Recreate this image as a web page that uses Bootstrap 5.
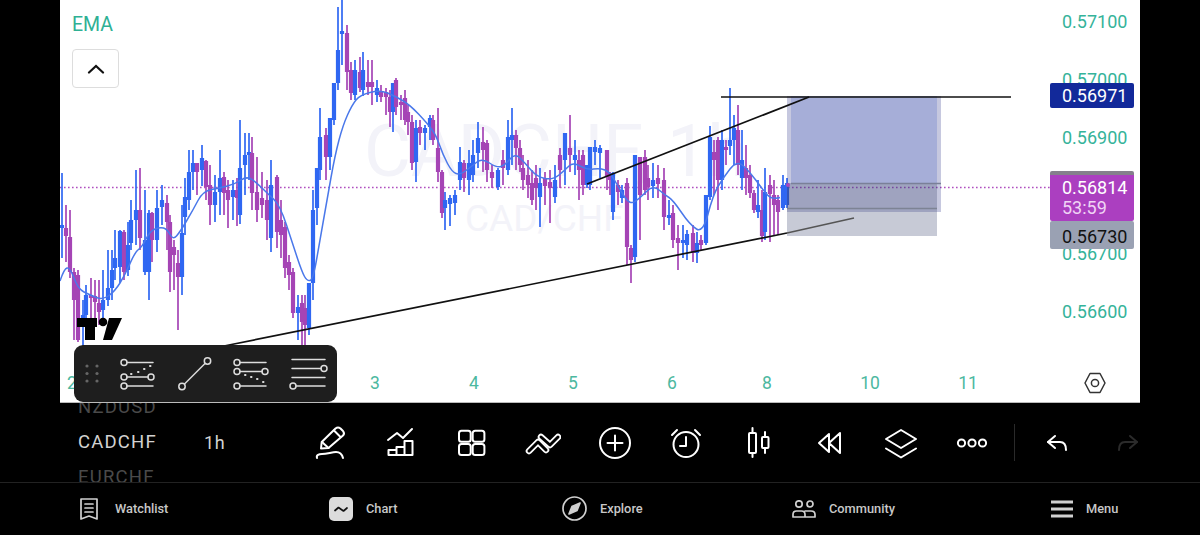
<!DOCTYPE html>
<html lang="en">
<head>
  <meta charset="UTF-8">
  <title>CADCHF Chart</title>
  <link href="https://cdn.jsdelivr.net/npm/bootstrap@5.3.3/dist/css/bootstrap.min.css" rel="stylesheet">
  <style>
    html, body { height: 535px; overflow: hidden; }
    body { background: #000; font-family: Roboto, "Liberation Sans", sans-serif; }
    .chart-area { width: 1080px; height: 403px; margin: 0 auto; background: #fff; position: relative; overflow: hidden; border-bottom: 1px solid #bbb; }
    .chart-svg { display: block; }
    .chart-svg text { font-family: Roboto, "Liberation Sans", sans-serif; }
    .axis-price { font-size: 18px; fill: #35b39a; }
    .axis-time { font-size: 17.5px; fill: #4cb8a0; text-anchor: middle; }
    .mark-big { font-size: 72px; fill: #f3f3f9; }
    .mark-small { font-size: 37px; fill: #f3f3f9; }
    .study-box { position: absolute; left: 12px; top: 13px; gap: 12px; }
    .study-name { font-size: 19.5px; line-height: 24px; color: #2fb094; }
    .study-btn { width: 47px; height: 39px; padding: 0; background: #fff; border: 1.5px solid #ddd; border-radius: 4px; }
    .price-tag { position: absolute; left: 990px; width: 84px; padding-left: 12px; border-radius: 2px; font-size: 18px; line-height: 25px; text-align: left; }
    .tag-target { top: 83px; height: 25px; background: #12299a; color: #fff; }
    .tag-last { top: 171px; height: 50px; padding-top: 3px; background: #ab3fc0; color: #fff; border-top: 4px solid #85808c; line-height: 20px; }
    .tag-last span { display: block; color: #f0d4f5; }
    .tag-stop { top: 221px; height: 28px; background: #9aa1b3; color: #111; line-height: 31px; }
    .draw-bar { position: absolute; left: 14px; top: 345px; width: 263px; height: 57px; background: #1e1e1e; border-radius: 9px; }
    .tool-row { height: 79px; }
    .symbol-col { width: 126px; margin-left: 78px; height: 79px; overflow: hidden; font-size: 18.5px; font-weight: 400; line-height: 35px; letter-spacing: 1.2px; color: #d2d2d2; }
    .symbol-col div { flex-shrink: 0; }
    .symbol-col div:first-child, .symbol-col div:last-child { color: #4a4a4a; }
    .frame-label { width: 89px; font-size: 18px; font-weight: 400; color: #d2d2d2; letter-spacing: .6px; }
    .tool-cell { width: 71.5px; height: 36px; }
    .tool-cell svg { display: block; margin: 0 auto; fill: none; stroke: #fff; stroke-width: 2; stroke-linecap: round; stroke-linejoin: round; }
    .tool-sep { width: 1px; height: 37px; background: #2a2a2a; margin: 0 6px 0 6px; }
    .dim-cell svg { stroke: #2b2b2b; }
    .nav-row { height: 52px; border-top: 1px solid #222; padding: 0 0 0 80px; display: grid; grid-template-columns: 249px 233px 230px 259px auto; align-items: center; margin-top: 0; }
    .nav-cell { gap: 13px; font-size: 12.8px; font-weight: 500; color: #c8c8c8; }
    .nav-cell svg { display: block; fill: none; stroke: #d0d0d0; stroke-width: 1.7; stroke-linejoin: round; stroke-linecap: round; }
  </style>
</head>
<body>
  <div class="chart-area">
    <svg id="grafico" class="chart-svg" width="1080" height="403" viewBox="60 0 1080 403">
      <text class="mark-big" x="364" y="176">CADCHF, 1h</text>
      <text class="mark-small" x="465" y="231">CAD/CHF</text>
      <line x1="60" y1="187.5" x2="1050" y2="187.5" stroke="#b04fc0" stroke-width="1.5" stroke-dasharray="1.6 2.4"></line>
      <g id="velas"></g>
      <path id="ema" fill="none" stroke="#4a78ea" stroke-width="1.5" stroke-linejoin="round"></path>

      <rect x="787" y="96" width="154" height="116" fill="#1a237e" fill-opacity=".25"></rect>
      <rect x="791" y="96" width="146" height="87" fill="#2a45c0" fill-opacity=".2"></rect>
      <rect x="787" y="183" width="150" height="53" fill="#465078" fill-opacity=".3"></rect>
      <line x1="791" y1="183.5" x2="941" y2="183.5" stroke="#7a8098" stroke-width="1.3"></line>
      <line x1="787" y1="208.5" x2="937" y2="208.5" stroke="#7d8394" stroke-width="1.3"></line>
      <circle cx="788" cy="185" r="2" fill="#ab47bc"></circle>

      <line x1="224" y1="346" x2="787" y2="233" stroke="#111" stroke-width="1.7"></line>
      <line x1="787" y1="233" x2="854" y2="218" stroke="#555" stroke-width="1.5"></line>
      <line x1="587" y1="184" x2="809" y2="97" stroke="#111" stroke-width="1.8"></line>
      <line x1="721" y1="97" x2="1011" y2="97" stroke="#111" stroke-width="1.5"></line>

      <path d="M77 318h20v9h-2v13H85v-13h-8z" fill="#000"></path>
      <circle cx="103" cy="322" r="4.3" fill="#000"></circle>
      <path d="M109 318h13l-10 22h-9z" fill="#000"></path>

      <text class="axis-price" x="1062" y="28">0.57100</text>
      <text class="axis-price" x="1062" y="86">0.57000</text>
      <text class="axis-price" x="1062" y="144">0.56900</text>
      <text class="axis-price" x="1062" y="260">0.56700</text>
      <text class="axis-price" x="1062" y="318">0.56600</text>

      <text class="axis-time" x="72" y="389">2</text>
      <text class="axis-time" x="375" y="389">3</text>
      <text class="axis-time" x="474" y="389">4</text>
      <text class="axis-time" x="573" y="389">5</text>
      <text class="axis-time" x="672" y="389">6</text>
      <text class="axis-time" x="767" y="389">8</text>
      <text class="axis-time" x="870" y="389">10</text>
      <text class="axis-time" x="968" y="389">11</text>

      <path d="M1090 373.5h10l5 9.5-5 9.5h-10l-5-9.5z" fill="none" stroke="#333" stroke-width="1.5" stroke-linejoin="round"></path>
      <circle cx="1095" cy="383" r="3.6" fill="none" stroke="#333" stroke-width="1.5"></circle>
    </svg>

    <div class="study-box d-flex flex-column align-items-start">
      <div class="study-name">EMA</div>
      <button type="button" class="btn study-btn d-flex align-items-center justify-content-center">
        <svg width="18" height="10" viewBox="0 0 18 10"><path d="M2 8.5 9 2l7 6.5" fill="none" stroke="#111" stroke-width="2.2" stroke-linecap="round"></path></svg>
      </button>
    </div>

    <div class="price-tag tag-target">0.56971</div>
    <div class="price-tag tag-stop">0.56730</div>
    <div class="price-tag tag-last">0.56814<span>53:59</span></div>

    <div class="draw-bar">
      <svg width="263" height="57" viewBox="74 345 263 57" fill="none" stroke="#ddd" stroke-width="1.5" stroke-linecap="round">
        <g fill="#666" stroke="none"><circle cx="87" cy="366" r="1.6"></circle><circle cx="97" cy="366" r="1.6"></circle><circle cx="87" cy="373.5" r="1.6"></circle><circle cx="97" cy="373.5" r="1.6"></circle><circle cx="87" cy="381" r="1.6"></circle><circle cx="97" cy="381" r="1.6"></circle></g>
        <circle cx="124" cy="362.5" r="3"></circle><path d="M127 362.5h26"></path>
        <path d="M131 374h.5M138 372h.5M144 369h.5M150 366h.5" stroke-width="2"></path>
        <circle cx="124" cy="377" r="3"></circle><path d="M127 377h21"></path><circle cx="151" cy="377" r="3"></circle>
        <circle cx="124" cy="386" r="3"></circle><path d="M127 386h26"></path>

        <circle cx="182" cy="386.5" r="3.2"></circle><circle cx="207.5" cy="361" r="3.2"></circle><path d="M184.5 384 205 363.5"></path>

        <circle cx="237" cy="362.5" r="3"></circle><path d="M240 362.5h26"></path>
        <circle cx="237" cy="371.5" r="3"></circle><path d="M240 371.5h22"></path><circle cx="265" cy="371.5" r="3"></circle>
        <path d="M245 375h.5M251 377h.5M257 379h.5M263 382h.5" stroke-width="2"></path>
        <circle cx="237" cy="386" r="3"></circle><path d="M240 386h26"></path>

        <path d="M292 359.5h33M292 368.5h29M292 377.5h33M296 386h29"></path>
        <circle cx="324" cy="368.5" r="3"></circle><circle cx="293" cy="386" r="3"></circle>
      </svg>
    </div>
  </div>

  <div class="tool-row d-flex align-items-center">
    <div class="symbol-col flex-shrink-0 d-flex flex-column justify-content-center">
      <div>NZDUSD</div>
      <div>CADCHF</div>
      <div>EURCHF</div>
    </div>
    <div class="frame-label flex-shrink-0">1h</div>
    <div class="tool-cell"><svg width="36" height="36" viewBox="0 0 36 36"><path d="M10 23.500l.7-6.500L24.500 3.500q2.500-2 5 0l2.500 2.500q2 2.500 0 4.500L17.500 23z"></path><path d="M11 17l6.500 6M23 5.500l6.500 6.500"></path><path d="M6 33c-1-3 2-4 5-4 5 0 10-2 14-2 3 0 6 2 7 6"></path></svg></div>
    <div class="tool-cell"><svg width="36" height="36" viewBox="0 0 36 36"><path d="M6 15l9-7 6 5 9-9"></path><path d="M6.500 30v-5h8v5M14.500 30v-8h8v8M22.500 30V16h8v14zM6.500 30h24"></path></svg></div>
    <div class="tool-cell"><svg width="36" height="36" viewBox="0 0 36 36"><rect x="5" y="5.700" width="11.700" height="11" rx="2.500"></rect><rect x="18.700" y="5.700" width="11.700" height="11" rx="2.500"></rect><rect x="5" y="19" width="11.700" height="11" rx="2.500"></rect><rect x="18.700" y="19" width="11.700" height="11" rx="2.500"></rect></svg></div>
    <div class="tool-cell"><svg width="36" height="36" viewBox="0 0 36 36"><g stroke-width="6.500"><path d="M4 26l9-9 8 8"></path><path d="M16 12l9 8 8-8"></path></g><g stroke="#000" stroke-width="3"><path d="M4 26l9-9 8 8"></path><path d="M16 12l9 8 8-8"></path></g></svg></div>
    <div class="tool-cell"><svg width="36" height="36" viewBox="0 0 36 36"><circle cx="18" cy="18" r="15"></circle><path d="M18 10.500v15M10.500 18h15"></path></svg></div>
    <div class="tool-cell"><svg width="36" height="36" viewBox="0 0 36 36"><circle cx="18" cy="19.500" r="12.500"></circle><path d="M18 12v9h-6M4 10l5-5M32 10l-5-5"></path></svg></div>
    <div class="tool-cell"><svg width="36" height="36" viewBox="0 0 36 36"><rect x="9" y="8" width="7" height="20" rx="1"></rect><path d="M12.500 3v5M12.500 28v4"></path><rect x="22" y="12" width="6.500" height="11" rx="1"></rect><path d="M25 7v5M25 23v5"></path></svg></div>
    <div class="tool-cell"><svg width="36" height="36" viewBox="0 0 36 36"><path d="M18 9 8 18l10 9zM29 8l-11 10 11 10z"></path></svg></div>
    <div class="tool-cell"><svg width="36" height="36" viewBox="0 0 36 36"><path d="M18 5 33 14 18 23 3 14z"></path><path d="M3 23.500l15 9 15-9"></path></svg></div>
    <div class="tool-cell"><svg width="36" height="36" viewBox="0 0 36 36"><circle cx="7.500" cy="18" r="3.600"></circle><circle cx="18" cy="18" r="3.600"></circle><circle cx="28.500" cy="18" r="3.600"></circle></svg></div>
    <div class="tool-sep"></div>
    <div class="tool-cell"><svg width="36" height="36" viewBox="0 0 36 36"><path d="M16 11 9 17l7 6"></path><path d="M9 17h12q6 0 6 8"></path></svg></div>
    <div class="tool-cell dim-cell"><svg width="36" height="36" viewBox="0 0 36 36"><path d="M20 11l7 6-7 6"></path><path d="M27 17H15q-6 0-6 8"></path></svg></div>
  </div>

  <nav class="nav-row">
    <div class="nav-cell d-flex align-items-center">
      <svg class="me-1" width="18" height="22" viewBox="0 0 18 22"><path d="M1 1h16v20l-8-3-8 3zM5 6h8M5 10h8M5 14h8"></path></svg>
      <span>Watchlist</span>
    </div>
    <div class="nav-cell d-flex align-items-center">
      <svg width="24" height="24" viewBox="0 0 24 24"><rect x="0" y="0" width="24" height="24" rx="5" fill="#dcdcdc" stroke="none"></rect><path d="M6 13.500l3.500-3 5 3.500L18 11" stroke="#111"></path></svg>
      <span>Chart</span>
    </div>
    <div class="nav-cell d-flex align-items-center">
      <svg width="25" height="25" viewBox="0 0 25 25"><circle cx="12.500" cy="12.500" r="11.500"></circle><path d="M18 7l-8 3.500L7 18l8-3.500zM10 10.500l5 4" fill="#d0d0d0"></path></svg>
      <span>Explore</span>
    </div>
    <div class="nav-cell d-flex align-items-center">
      <svg width="24" height="18" viewBox="0 0 24 18"><circle cx="7" cy="4" r="3.200"></circle><circle cx="18" cy="4" r="3"></circle><path d="M1 17v-2.500Q1 11 4.500 11h5q3.500 0 3.500 3.500V17zM13 11h6q4 0 4 3.500V17H13"></path></svg>
      <span>Community</span>
    </div>
    <div class="nav-cell d-flex align-items-center">
      <svg width="22" height="18" viewBox="0 0 22 18"><path d="M0 2h22M0 9h22M0 16h22" stroke-width="3" stroke-linecap="butt"></path></svg>
      <span>Menu</span>
    </div>
  </nav>

  <script src="https://cdn.jsdelivr.net/npm/bootstrap@5.3.3/dist/js/bootstrap.bundle.min.js"></script>
  <script>
    // x, mecha arriba, cuerpo arriba, cuerpo abajo, mecha abajo, color (0 azul, 1 morado)
    const velas = [
      [62,173,225,228,258,0],[66,205,228,236,262,1],[70,210,237,272,278,1],[74,268,272,300,340,1],[78,270,275,340,342,1],[83,300,315,322,350,0],
      [86,285,295,315,330,0],[91,278,295,298,320,1],[95,280,296,302,322,1],[99,280,303,312,325,1],[103,270,300,310,318,0],[108,250,288,300,306,0],
      [112,250,270,288,300,0],[115,230,258,268,280,0],[120,230,231,267,283,0],[124,230,232,272,280,1],[128,222,245,270,276,0],[131,200,220,243,250,0],
      [136,170,210,220,245,0],[140,168,210,238,250,1],[145,190,240,272,275,0],[149,210,213,272,300,0],[152,212,213,240,262,1],[157,190,208,240,252,0],
      [162,185,200,207,225,0],[167,195,203,222,250,1],[170,215,222,272,292,1],[174,240,247,255,290,1],[178,250,263,277,330,1],[182,205,233,277,295,0],
      [185,178,197,217,235,0],[189,150,172,200,210,0],[193,150,163,172,190,0],[197,165,163,172,195,1],[202,145,158,170,186,0],[206,160,161,187,200,1],
      [210,165,185,205,225,1],[215,175,192,205,222,0],[220,150,178,192,215,0],[224,172,177,193,215,1],[228,180,190,200,228,1],[233,180,190,197,220,0],
      [237,178,190,198,226,1],[240,120,168,215,224,0],[245,133,155,165,195,0],[249,133,152,155,180,0],[252,137,153,193,210,1],[257,157,192,210,222,1],
      [262,172,198,205,218,1],[267,180,200,220,240,1],[271,160,185,238,252,0],[277,175,177,232,248,1],[281,200,220,235,258,1],[285,222,227,268,278,1],
      [289,255,262,275,290,1],[293,268,272,313,318,1],[298,295,307,313,340,0],[302,295,303,322,345,1],[305,295,308,325,350,1],[309,283,283,328,335,0],
      [313,190,210,283,300,0],[317,168,168,208,225,0],[320,108,137,170,180,0],[326,128,135,157,180,1],[330,118,118,157,170,0],[334,83,83,120,125,0],
      [338,7,50,83,90,0],[342,0,31,34,65,0],[347,25,33,72,90,1],[351,62,70,93,100,1],[355,60,70,95,100,0],[360,57,72,88,92,1],[363,52,70,90,96,0],
      [368,60,82,87,95,1],[372,60,82,87,105,1],[377,80,88,95,102,0],[381,85,92,97,102,1],[386,88,92,97,115,1],[390,90,97,112,127,1],[393,83,83,112,132,0],
      [396,78,80,107,115,1],[401,95,102,105,120,1],[405,90,98,120,125,1],[408,105,112,122,135,1],[412,115,122,163,170,1],[416,120,128,162,182,0],
      [420,120,127,133,145,1],[425,125,128,133,150,0],[430,115,118,127,140,0],[433,115,120,140,145,1],[438,108,148,172,182,1],[442,170,172,213,218,1],
      [445,192,200,208,230,0],[450,195,198,204,226,0],[455,190,195,203,215,0],[460,147,162,180,190,0],[464,160,163,178,192,1],[469,150,163,180,195,0],
      [473,140,155,175,182,0],[478,122,138,153,168,0],[483,127,142,150,172,1],[487,140,143,170,182,1],[492,165,172,178,188,1],[498,168,170,187,190,0],
      [503,150,160,168,185,1],[508,120,137,170,175,0],[512,108,135,140,165,0],[516,130,135,148,170,1],[520,140,148,165,172,1],[523,155,168,180,190,1],
      [528,160,175,185,198,1],[532,170,183,200,205,1],[536,165,178,188,210,1],[540,168,183,197,227,0],[545,172,178,186,205,1],[550,170,182,188,223,1],
      [555,165,180,197,203,0],[560,148,155,170,188,1],[565,133,133,160,185,0],[570,115,148,155,172,1],[575,140,155,160,175,0],[579,150,160,170,200,1],
      [583,150,155,185,195,1],[587,165,165,185,188,0],[590,147,147,185,190,0],[595,140,147,152,165,0],[600,145,148,153,178,0],[607,150,150,177,190,1],
      [610,172,173,180,195,1],[613,172,173,212,220,0],[618,180,185,192,205,1],[622,185,190,198,203,0],[627,178,183,247,265,1],[631,245,248,260,283,1],
      [635,155,155,257,262,0],[640,157,157,195,240,1],[645,150,157,190,195,1],[648,165,178,187,200,1],[653,163,180,186,198,0],[658,165,178,184,198,1],
      [664,168,180,217,230,1],[669,200,215,218,225,0],[673,205,213,240,248,1],[678,225,238,243,270,1],[683,225,240,243,258,0],[687,230,234,245,260,0],
      [693,225,233,253,262,1],[697,232,243,253,263,0],[701,235,240,245,250,1],[706,195,195,243,245,0],[710,126,137,197,200,0],[714,140,152,160,195,1],
      [718,137,140,180,210,1],[722,130,140,180,190,0],[726,140,147,150,165,1],[730,88,140,146,155,0],[734,115,128,140,165,0],[738,105,130,165,175,1],
      [742,130,160,178,190,0],[746,145,168,178,195,1],[750,165,175,193,198,1],[754,190,193,210,213,1],[758,180,205,212,218,0],[762,190,210,236,242,1],
      [765,168,192,232,240,0],[770,175,185,194,242,1],[774,180,195,205,235,1],[778,195,200,212,235,1],[783,175,185,208,210,0],[787,178,183,205,208,0]
    ];

    // puntos de la media movil
    const emaPuntos = [[60,281],[64,269],[70,267],[78,289],[90,295],[103,300],[115,291],[125,275],[135,252],[142,247],[150,231],[160,227],[167,229],[173,240],
      [180,232],[193,210],[203,191],[220,188],[235,184],[247,176],[257,183],[267,193],[280,205],[293,245],[302,272],[307,281],[313,280],[320,240],[327,200],[335,155],[343,125],
      [352,105],[360,95],[380,90],[395,96],[410,105],[427,123],[436,135],[443,155],[452,172],[460,175],[472,166],[482,158],[497,168],[505,165],[515,153],[525,163],[537,177],
      [553,180],[565,170],[573,162],[587,170],[600,168],[610,172],[620,190],[630,205],[640,198],[653,185],[665,195],[673,200],[690,225],[703,233],[713,195],[723,178],[737,160],
      [750,172],[763,190],[772,200],[788,195]];

    const NS = 'http://www.w3.org/2000/svg';
    const grupo = document.getElementById('velas');
    const colores = ['#2f67f2', '#a544b5'];

    velas.forEach(v => {
      const [x, alto, arriba, abajo, bajo, c] = v;
      const mecha = document.createElementNS(NS, 'line');
      mecha.setAttribute('x1', x);
      mecha.setAttribute('x2', x);
      mecha.setAttribute('y1', alto);
      mecha.setAttribute('y2', bajo);
      mecha.setAttribute('stroke', colores[c]);
      mecha.setAttribute('stroke-width', 1.7);
      grupo.appendChild(mecha);

      const cuerpo = document.createElementNS(NS, 'rect');
      cuerpo.setAttribute('x', x - 2.1);
      cuerpo.setAttribute('y', arriba);
      cuerpo.setAttribute('width', 4.2);
      cuerpo.setAttribute('height', Math.max(abajo - arriba, 2));
      cuerpo.setAttribute('fill', colores[c]);
      grupo.appendChild(cuerpo);
    });

    // curva suave pasando por los puntos medios
    let d = `M${emaPuntos[0].join(' ')}`;
    for (let i = 1; i < emaPuntos.length - 1; i++) {
      const [x, y] = emaPuntos[i];
      const [nx, ny] = emaPuntos[i + 1];
      d += ` Q${x} ${y} ${(x + nx) / 2} ${(y + ny) / 2}`;
    }
    document.getElementById('ema').setAttribute('d', d);
  </script>
</body>
</html>
